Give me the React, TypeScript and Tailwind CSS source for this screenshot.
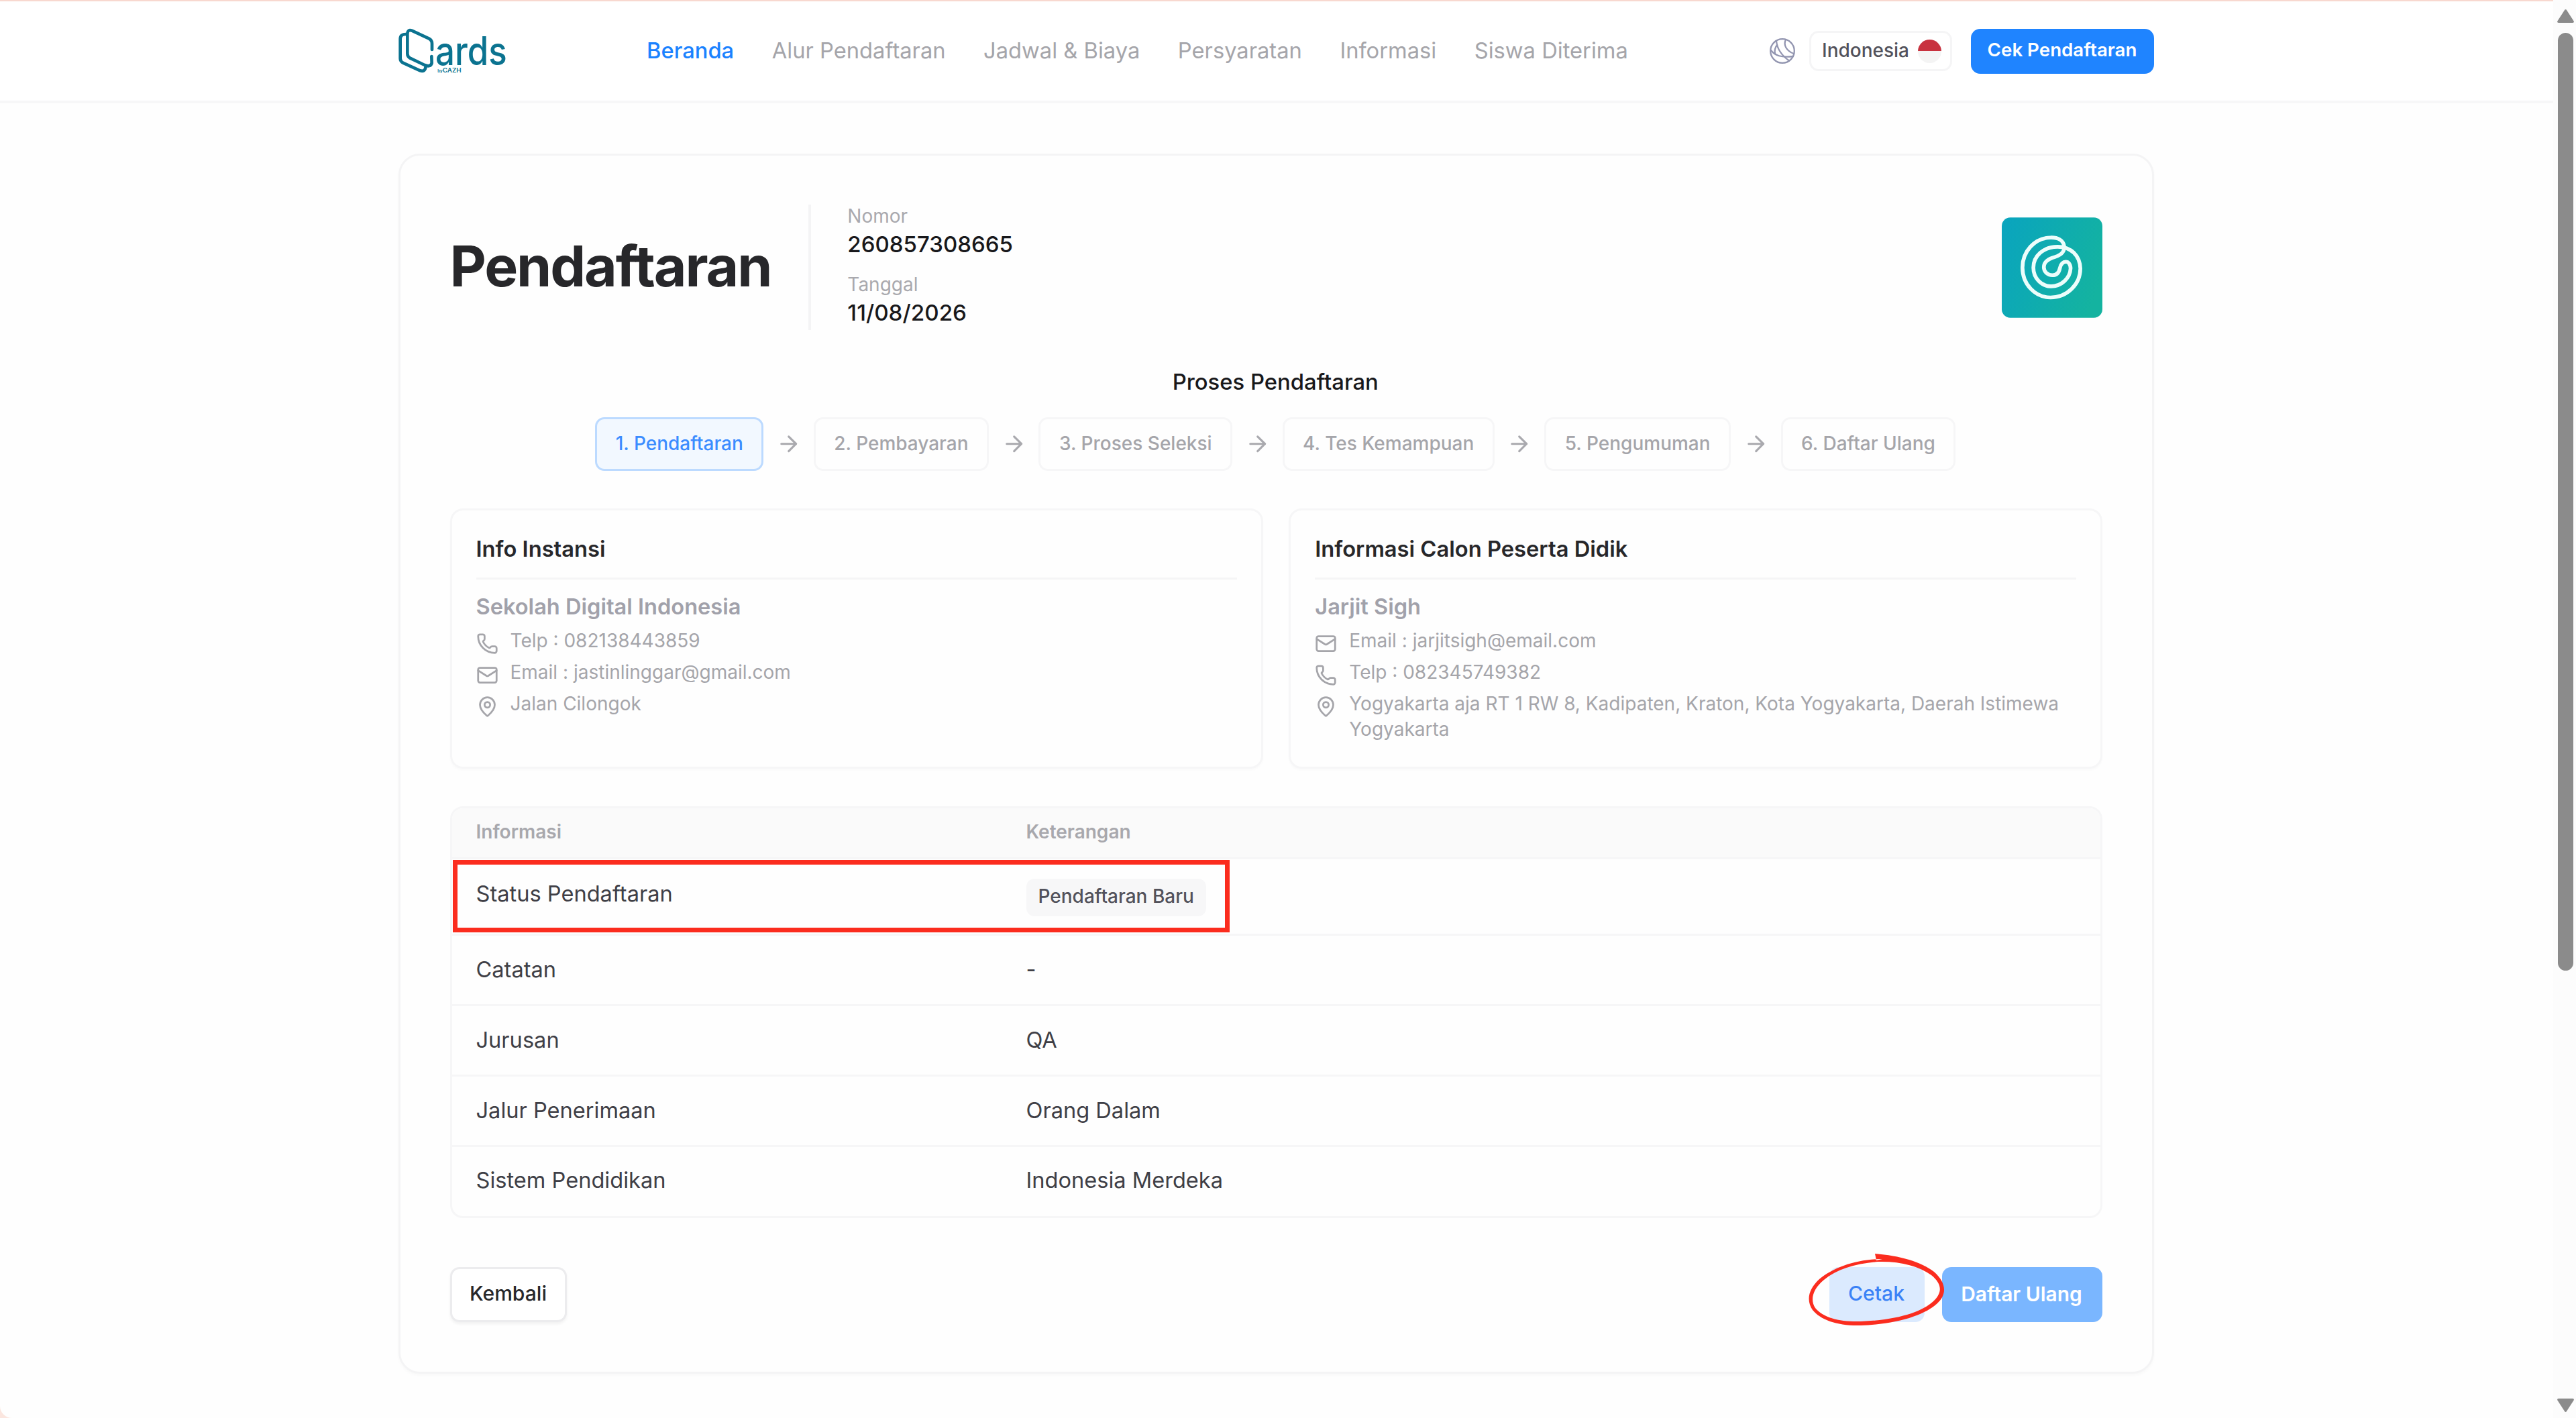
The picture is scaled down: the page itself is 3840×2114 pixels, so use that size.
import { ArrowRight, Mail, MapPin, Phone, type LucideIcon } from "lucide-react";
import clsx from "clsx";

const menus = [
  "Beranda",
  "Alur Pendaftaran",
  "Jadwal & Biaya",
  "Persyaratan",
  "Informasi",
  "Siswa Diterima",
];

const steps = [
  "1. Pendaftaran",
  "2. Pembayaran",
  "3. Proses Seleksi",
  "4. Tes Kemampuan",
  "5. Pengumuman",
  "6. Daftar Ulang",
];

const details = [
  { label: "Catatan", value: "-" },
  { label: "Jurusan", value: "QA" },
  { label: "Jalur Penerimaan", value: "Orang Dalam" },
  { label: "Sistem Pendidikan", value: "Indonesia Merdeka" },
];

const CardsLogo = () => (
  <svg viewBox="0 0 540 255" className="h-[85px] w-[180px] shrink-0 overflow-visible">
    <g
      fill="none"
      stroke="#0b7390"
      strokeWidth="14"
      strokeLinecap="round"
      strokeLinejoin="round"
    >
      <path d="M177 120V93Q177 78 164 71L87 35Q68 28 67 50V138Q67 151 79 158L144 189Q170 200 176 180L175 150" />
      <path d="M62 51Q35 50 35 72V160Q35 172 47 179L124 214Q146 221 149 196" />
    </g>
    <text
      x="192"
      y="188"
      fontSize="178"
      textLength="320"
      lengthAdjust="spacingAndGlyphs"
      fill="#0b7390"
      className="font-['Inter',sans-serif] font-medium"
    >
      ards
    </text>
    <text
      x="202"
      y="221"
      fontSize="27"
      textLength="106"
      lengthAdjust="spacingAndGlyphs"
      fill="#0b7390"
      className="font-['Inter',sans-serif] font-semibold"
    >
      <tspan fontSize="17">by</tspan>CAZH
    </text>
  </svg>
);

const GlobeIcon = () => (
  <svg
    viewBox="0 0 40 40"
    className="size-[40px] shrink-0"
    fill="none"
    stroke="#9295b0"
    strokeWidth="2.3"
    strokeLinecap="round"
  >
    <circle cx="20" cy="20" r="17.8" />
    <path d="M11 5C12 16 18 26 30 34.500" />
    <path d="M25 3C21 11 26 20 37 24" />
    <path d="M3 19C9 27 18 30 36 28" />
    <path d="M12 11C9 15 8 19 9 24" />
  </svg>
);

const SchoolLogo = () => (
  <svg viewBox="251 131 452 450" className="size-[150px]">
    <defs>
      <linearGradient id="school" x1="0" y1="0.2" x2="1" y2="0.6">
        <stop offset="0" stopColor="#0aa5bd" />
        <stop offset="1" stopColor="#14b3a0" />
      </linearGradient>
    </defs>
    <rect x="251" y="131" width="452" height="450" rx="38" fill="url(#school)" />
    <path
      d="M532 262C528 232 502 220 470 221C398 222 344 284 344 356C344 430 400 490 470 490C546 490 604 430 604 360C602 302 562 262 502 262C438 262 393 304 393 356C393 402 428 440 472 440C520 440 558 402 560 360C560 318 518 322 512 358C508 380 496 390 478 390C456 390 440 374 440 354C440 334 456 320 478 312C510 302 532 292 532 262Z"
      fill="none"
      stroke="#ecfdfb"
      strokeWidth="17"
    />
  </svg>
);

interface ContactProps {
  icon: LucideIcon;
  text: string;
}

const Contact = ({ icon: Icon, text }: ContactProps) => (
  <div className="flex items-start gap-[18px] text-[28px] leading-[37.5px] text-[#a5a5aa]">
    <Icon className="mt-[6px] size-[33px] shrink-0" />
    <span>{text}</span>
  </div>
);

interface InfoPanelProps {
  title: string;
  name: string;
  contacts: ContactProps[];
}

const InfoPanel = ({ title, name, contacts }: InfoPanelProps) => (
  <div className="h-[388px] rounded-[19px] border-[3px] border-[#f6f6f7] px-[36px] pt-[34px] shadow-[0_3px_3px_#00000004]">
    <h3 className="border-b-[3px] border-[#f5f5f6] pb-[19px] text-[32.7px] leading-[47px] font-semibold text-[#27272a]">
      {title}
    </h3>
    <p className="mt-[17px] text-[32.600px] leading-[47px] font-semibold text-[#a1a1aa]">
      {name}
    </p>
    <div className="mt-[9px] flex flex-col gap-[8px]">
      {contacts.map((contact) => (
        <Contact key={contact.text} {...contact} />
      ))}
    </div>
  </div>
);

const Header = () => (
  <header className="flex h-[154px] items-center border-t-[2px] border-b-[4px] border-t-[#f8d8cf] border-b-[#f7f7f8] bg-white pl-[585px]">
    <CardsLogo />
    <nav className="-mt-[2px] ml-[199px] flex flex-1 gap-[56.500px] text-[32.7px] leading-[46px] text-[#a5a5aa]">
      {menus.map((menu, i) => (
        <span
          key={menu}
          className={clsx("whitespace-nowrap", i === 0 && "font-medium text-[#1a82ff]")}
        >
          {menu}
        </span>
      ))}
    </nav>
    <div className="mr-[595px] flex items-center">
      <GlobeIcon />
      <div className="ml-[20px] flex h-[60px] w-[213px] items-center justify-between rounded-[14px] border-[3px] border-[#f5f5f6] pr-[13px] pl-[16px] text-[28px] font-medium text-[#52525b]">
        <span className="-mt-[2px]">Indonesia</span>
        <span className="flex size-[35px] flex-col overflow-hidden rounded-full bg-[#f4f4f4]">
          <span className="h-1/2 bg-[#c8323f]" />
        </span>
      </div>
      <button className="ml-[28px] h-[67px] w-[273px] rounded-[14px] bg-[#1f84ff] pr-[1px] pb-[2px] text-[27.700px] font-semibold text-white">
        Cek Pendaftaran
      </button>
    </div>
  </header>
);

const Scrollbar = () => (
  <div className="flex h-full w-[34px] flex-col items-center bg-[#fcfcfc] pt-[14px] pr-[3px] pb-[9px] pl-[6px]">
    <svg viewBox="0 0 25 20" className="h-[20px] w-[25px] shrink-0 fill-[#8b8b8b]">
      <path d="M12.500 0Q13.500 0 14 1L25 18Q25 20 23 20H2Q0 20 0 18L11 1Q11.500 0 12.500 0Z" />
    </svg>
    <div className="mt-[15px] h-[1398px] w-[23px] shrink-0 rounded-full bg-[#8b8b8b]" />
    <svg viewBox="0 0 25 20" className="mt-auto h-[20px] w-[25px] shrink-0 rotate-180 fill-[#8b8b8b]">
      <path d="M12.500 0Q13.500 0 14 1L25 18Q25 20 23 20H2Q0 20 0 18L11 1Q11.500 0 12.500 0Z" />
    </svg>
  </div>
);

const RegistrationHeading = () => (
  <div className="flex h-[187px] items-center">
    <h1 className="-mt-[3px] text-[84px] leading-none font-bold tracking-[-0.025em] text-[#27272a]">
      Pendaftaran
    </h1>
    <div className="ml-[56px] h-full w-[4px] bg-[#f4f4f5]" />
    <div className="-mt-[4px] ml-[54px] flex-1">
      <div className="text-[28px] leading-[37px] text-[#a9a9ae]">Nomor</div>
      <div className="text-[33px] leading-[46px] font-medium text-[#18181b]">
        260857308665
      </div>
      <div className="mt-[19px] text-[28px] leading-[37px] text-[#a9a9ae]">Tanggal</div>
      <div className="text-[33.200px] leading-[46px] font-medium text-[#18181b]">
        11/08/2026
      </div>
    </div>
    <SchoolLogo />
  </div>
);

const Steps = () => (
  <div className="mt-[30px] flex items-center justify-center gap-[18.500px] pr-[2px]">
    {steps.map((step, i) => (
      <div key={step} className="flex items-center gap-[18.500px]">
        {i > 0 && <ArrowRight className="size-[37.4px] text-[#a9a9ae]" />}
        <div
          className={clsx(
            "h-[80px] rounded-[14px] border-[3px] px-[27.500px] text-[28px] leading-[73px] font-medium",
            i === 0
              ? "border-[#bcdaff] bg-[#f2f8ff] text-[#3b8cff]"
              : "border-[#f6f6f7] text-[#a5a5aa]"
          )}
        >
          {step}
        </div>
      </div>
    ))}
  </div>
);

const DetailTable = () => (
  <div className="relative mt-[56px] rounded-[19px] border-[3px] border-[#f6f6f7] text-[32.600px] leading-[46px] text-[#3f3f46]">
    <div className="flex h-[76px] rounded-t-[16px] border-b-[3px] border-[#f6f6f7] bg-[#fafafa] px-[36px] text-[28px] leading-[71px] font-semibold text-[#a8a8ad]">
      <span className="w-[820px]">Informasi</span>
      <span>Keterangan</span>
    </div>
    <div className="flex h-[114px] items-start border-b-[3px] border-[#f6f6f7] px-[36px] pt-[28px]">
      <span className="w-[820px]">Status Pendaftaran</span>
      <span className="mt-[1px] h-[56px] rounded-[12px] bg-[#f7f7f8] px-[18px] text-[28px] leading-[53px] font-medium text-[#52525b]">
        Pendaftaran Baru
      </span>
    </div>
    {details.map((detail) => (
      <div
        key={detail.label}
        className="flex h-[105px] items-start border-b-[3px] border-[#f6f6f7] px-[36px] pt-[27px] last-of-type:h-[103px] last-of-type:border-b-0 last-of-type:pt-[26px]"
      >
        <span className="w-[820px]">{detail.label}</span>
        <span>{detail.value}</span>
      </div>
    ))}
    {/* Marker around the status row */}
    <span className="absolute top-[77px] left-[1px] h-[108px] w-[1158px] border-[7px] border-[#fb2c1e]" />
  </div>
);

const Actions = () => (
  <div className="mt-[73px] flex h-[82px] items-stretch text-[30.100px] font-medium">
    <button className="w-[174px] rounded-[14px] border-[3px] border-[#ececee] bg-white pb-[2px] text-[#27272a] shadow-[0_3px_4px_#0000000d]">
      Kembali
    </button>
    <div className="relative ml-auto">
      <button className="h-full w-[142px] rounded-[14px] bg-[#dbeafe] pr-[2px] pb-[2px] text-[#3b82f6]">
        Cetak
      </button>
      {/* Hand drawn circle around the print button */}
      <svg
        viewBox="2687 1862 220 124"
        className="absolute -top-[27px] -left-[40px] h-[124px] w-[220px] max-w-none"
      >
        <path
          d="M2795 1869C2832 1872 2864 1881 2883 1896C2901 1912 2903 1929 2888 1943C2870 1960 2830 1974 2774 1976C2740 1977 2714 1968 2702 1953C2692 1938 2696 1922 2712 1907C2734 1889 2768 1877 2806 1877L2797 1879Z M2799 1881C2766 1884 2738 1892 2719 1908C2702 1922 2698 1938 2706 1950C2718 1965 2744 1971 2774 1970C2828 1968 2865 1956 2882 1940C2896 1927 2895 1914 2879 1901C2860 1887 2832 1880 2799 1881Z"
          fill="#fb2c1e"
          fillRule="evenodd"
        />
      </svg>
    </div>
    <button className="ml-[26px] w-[239px] rounded-[14px] bg-[#7ab6ff] pr-[2px] pb-[2px] text-[29.900px] font-semibold text-white">
      Daftar Ulang
    </button>
  </div>
);

export default function App() {
  return (
    <div className="flex h-[2114px] w-[3840px] overflow-hidden bg-[#fbe6df] font-['Inter',sans-serif]">
      <div className="flex flex-1 overflow-hidden rounded-bl-[18px] bg-[#fefefe]">
        <div className="flex-1">
          <Header />
          <main className="mt-[75px] ml-[594px] h-[1819px] w-[2617px] rounded-[32px] border-[3px] border-[#f4f4f5] pt-[73px] pr-[74px] pl-[73.500px] shadow-[0_3px_4px_#00000006]">
            <RegistrationHeading />
            <h2 className="mt-[54px] pr-[2px] text-center text-[32.800px] leading-[46px] font-medium text-[#18181b]">
              Proses Pendaftaran
            </h2>
            <Steps />
            <div className="mt-[56px] grid grid-cols-2 gap-[38px]">
              <InfoPanel
                title="Info Instansi"
                name="Sekolah Digital Indonesia"
                contacts={[
                  { icon: Phone, text: "Telp : 082138443859" },
                  { icon: Mail, text: "Email : jastinlinggar@gmail.com" },
                  { icon: MapPin, text: "Jalan Cilongok" },
                ]}
              />
              <InfoPanel
                title="Informasi Calon Peserta Didik"
                name="Jarjit Sigh"
                contacts={[
                  { icon: Mail, text: "Email : jarjitsigh@email.com" },
                  { icon: Phone, text: "Telp : 082345749382" },
                  {
                    icon: MapPin,
                    text: "Yogyakarta aja RT 1 RW 8, Kadipaten, Kraton, Kota Yogyakarta, Daerah Istimewa Yogyakarta",
                  },
                ]}
              />
            </div>
            <DetailTable />
            <Actions />
          </main>
        </div>
        <Scrollbar />
      </div>
    </div>
  );
}
